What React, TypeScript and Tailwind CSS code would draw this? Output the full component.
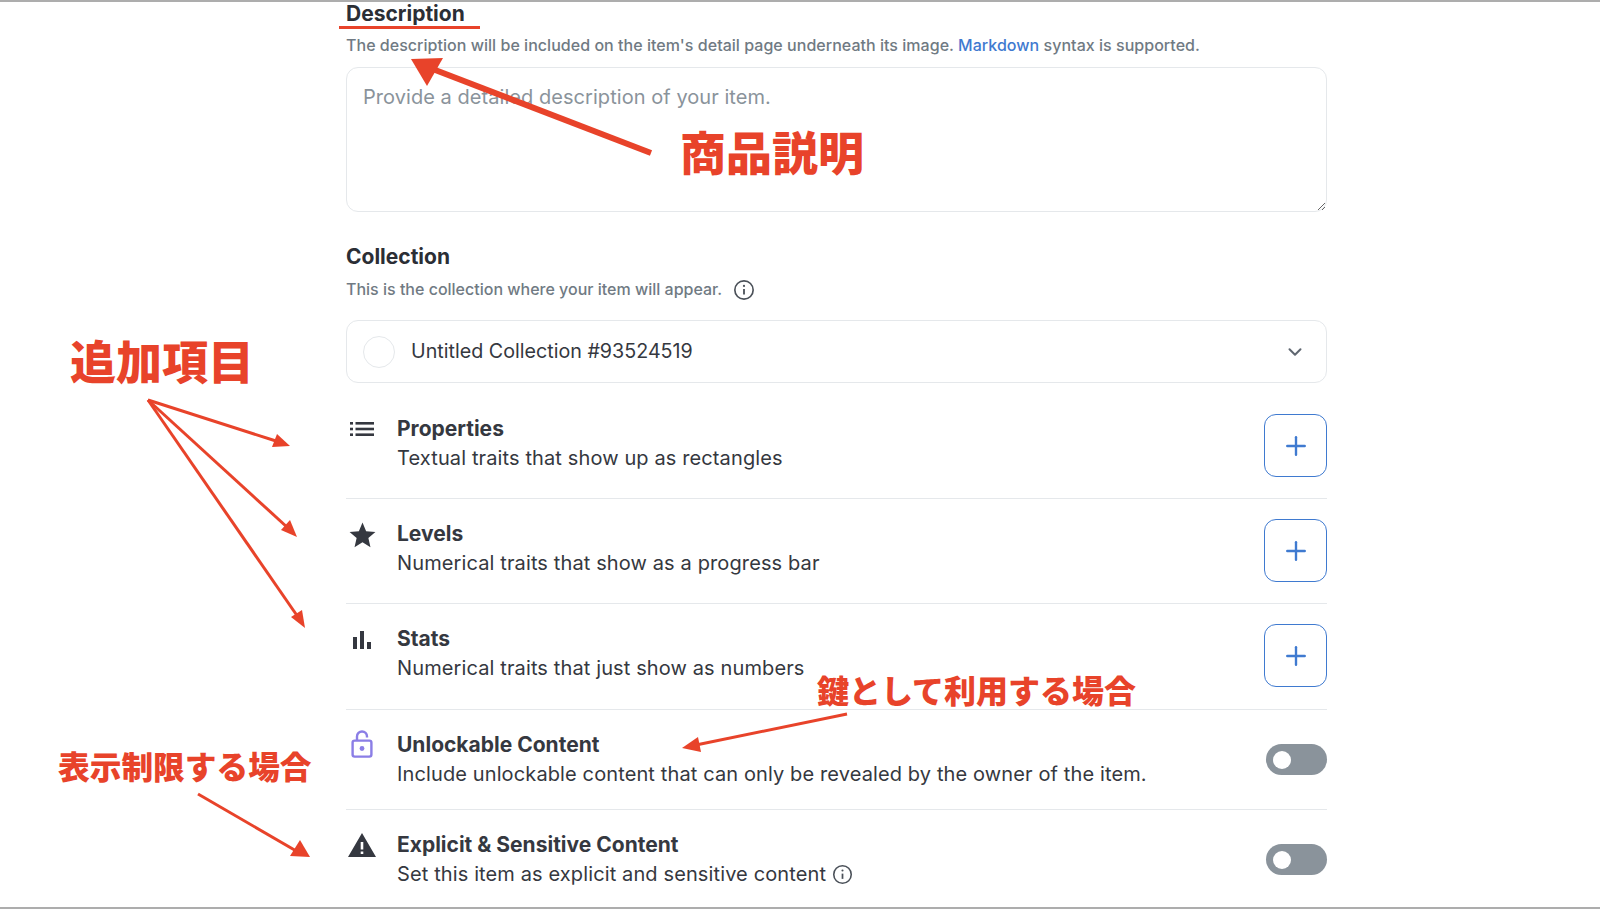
import { ChevronDown, Plus } from 'lucide-react';
import type { ReactNode } from 'react';

const RED = '#e8432a';

function InfoIcon({ className }: { className: string }) {
  return (
    <svg className={className} viewBox="0 0 24 24" fill="none" stroke="#4b5159" strokeWidth="1.8">
      <circle cx="12" cy="12" r="10" />
      <path d="M12 11v6" strokeWidth="2" />
      <circle cx="12" cy="7.5" r="1.2" fill="#4b5159" stroke="none" />
    </svg>
  );
}

function ListIcon() {
  return (
    <svg className="w-[26px] h-[16px]" viewBox="0 0 26 16" fill="#353840">
      <rect x="1" y="1" width="3" height="2.6" />
      <rect x="1" y="6.7" width="3" height="2.6" />
      <rect x="1" y="12.4" width="3" height="2.6" />
      <rect x="6.5" y="1" width="18.5" height="2.6" />
      <rect x="6.5" y="6.7" width="18.5" height="2.6" />
      <rect x="6.5" y="12.4" width="18.5" height="2.6" />
    </svg>
  );
}

function StarIcon() {
  return (
    <svg className="w-[31px] h-[31px]" viewBox="0 0 24 24" fill="#353840">
      <path d="M12 17.27 18.18 21l-1.64-7.03L22 9.24l-7.19-.61L12 2 9.19 8.63 2 9.24l5.46 4.73L5.82 21z" />
    </svg>
  );
}

function BarsIcon() {
  return (
    <svg className="w-[20px] h-[18px]" viewBox="0 0 20 18" fill="#353840">
      <rect x="1" y="6" width="4" height="12" />
      <rect x="8" y="0" width="4" height="18" />
      <rect x="15" y="11" width="4" height="7" />
    </svg>
  );
}

function LockIcon() {
  return (
    <svg className="w-[22px] h-[28px]" viewBox="0 0 22 28" fill="none" stroke="#8b7ee6" strokeWidth="2.4">
      <rect x="1.6" y="10.6" width="18.8" height="16" rx="2" />
      <path d="M6 10.5V6.5a5 5 0 0 1 10 0v1" />
      <circle cx="11" cy="18.5" r="2.4" fill="#8b7ee6" stroke="none" />
    </svg>
  );
}

function WarningIcon() {
  return (
    <svg className="w-[30px] h-[26px]" viewBox="0 0 30 26" fill="#353840">
      <path fillRule="evenodd" d="M15 1 29 25H1zM13.7 10v7.5h2.6V10zM13.7 19.5v2.6h2.6v-2.6z" />
    </svg>
  );
}

function AddButton() {
  return (
    <button className="w-[63px] h-[63px] shrink-0 rounded-[12px] border border-[#3f7ad0] flex items-center justify-center bg-white">
      <Plus className="w-[30px] h-[30px] text-[#3f7ad0]" strokeWidth={1.9} />
    </button>
  );
}

function Toggle() {
  return (
    <div className="w-[61px] h-[31px] shrink-0 rounded-full bg-[#8a939b] flex items-center pl-[7px]">
      <div className="w-[18px] h-[18px] rounded-full bg-white" />
    </div>
  );
}

function Row({
  icon,
  title,
  sub,
  action,
  actionClass,
  height,
  iconClass,
  last,
}: {
  icon: ReactNode;
  title: string;
  sub: ReactNode;
  action: ReactNode;
  actionClass: string;
  height: string;
  iconClass: string;
  last?: boolean;
}) {
  return (
    <div className={`flex items-start pt-[21px] ${height} ${last ? '' : 'border-b border-[#e5e8eb]'}`}>
      <div className={`w-8 mr-[19px] flex justify-center ${iconClass}`}>{icon}</div>
      <div className="flex-1">
        <div className="text-[21px] leading-[28px] font-bold text-[#353840]">{title}</div>
        <div className="text-[20px] leading-[30px] text-[#353840] tracking-[0.12px]">{sub}</div>
      </div>
      <div className={actionClass}>{action}</div>
    </div>
  );
}

export default function App() {
  return (
    <div className="relative h-[909px] overflow-hidden bg-white border-t-2 border-b-2 border-[#adadad] font-['Inter','Noto_Sans_CJK_JP',sans-serif]">
      <div className="ml-[346px] w-[981px]">
        <h2 className="text-[21px] leading-[24px] font-bold text-[#2b2e35]">Description</h2>
        <p className="mt-[7px] text-[16px] leading-[24px] text-[#707a83] font-medium tracking-[0.03px]">
          The description will be included on the item's detail page underneath its image.{' '}
          <span className="text-[#3f7ad0]">Markdown</span> syntax is supported.
        </p>
        <textarea
          readOnly
          placeholder="Provide a detailed description of your item."
          className="mt-[10px] block w-full h-[145px] rounded-[12px] border border-[#e5e8eb] px-[16px] py-[14px] text-[20px] leading-[30px] tracking-[0.05px] text-[#353840] placeholder:text-[#8a939b] outline-none"
        />

        <h2 className="mt-[31px] text-[21px] leading-[28px] font-bold text-[#2b2e35]">Collection</h2>
        <div className="mt-[6px] flex items-center text-[16px] leading-[24px] text-[#707a83] font-medium">
          This is the collection where your item will appear.
          <InfoIcon className="ml-[11px] mt-[2px] w-[22px] h-[22px]" />
        </div>
        <div className="mt-[19px] h-[63px] rounded-[12px] border border-[#e5e8eb] flex items-center pl-[16px] pr-[20px]">
          <div className="w-[32px] h-[32px] rounded-full border border-[#e5e8eb]" />
          <span className="ml-[16px] flex-1 text-[19.7px] text-[#353840]">Untitled Collection #93524519</span>
          <ChevronDown className="w-[22px] h-[22px] text-[#5f6670]" strokeWidth={2.2} />
        </div>

        <div className="mt-[11px]">
          <Row
            icon={<ListIcon />}
            iconClass="pt-[6px]"
            title="Properties"
            sub="Textual traits that show up as rectangles"
            action={<AddButton />}
            actionClass="-mt-[1px]"
            height="h-[105px]"
          />
          <Row
            icon={<StarIcon />}
            iconClass="pt-0"
            title="Levels"
            sub="Numerical traits that show as a progress bar"
            action={<AddButton />}
            actionClass="-mt-[1px]"
            height="h-[105px]"
          />
          <Row
            icon={<BarsIcon />}
            iconClass="pt-[6px]"
            title="Stats"
            sub="Numerical traits that just show as numbers"
            action={<AddButton />}
            actionClass="-mt-[1px]"
            height="h-[106px]"
          />
          <Row
            icon={<LockIcon />}
            iconClass="-mt-[1px]"
            title="Unlockable Content"
            sub="Include unlockable content that can only be revealed by the owner of the item."
            action={<Toggle />}
            actionClass="pt-[13px]"
            height="h-[100px]"
          />
          <Row
            icon={<WarningIcon />}
            iconClass="pt-[1px]"
            title="Explicit & Sensitive Content"
            sub={
              <span className="flex items-center">
                Set this item as explicit and sensitive content
                <InfoIcon className="ml-[6px] w-[21px] h-[21px]" />
              </span>
            }
            action={<Toggle />}
            actionClass="pt-[13px]"
            height="h-[96px]"
            last
          />
        </div>
      </div>

      {/* annotations on top of the screenshot */}
      <div className="absolute left-[339px] top-[24px] w-[141px] h-[3px] bg-[#e8432a]" />
      <svg className="absolute left-0 top-[-2px] w-[1600px] h-[909px] pointer-events-none" viewBox="0 0 1600 909">
        <g stroke={RED} fill="none">
          <path d="M651 153 430 68" strokeWidth="6" />
          <path d="M148 400 276 441" strokeWidth="3" />
          <path d="M148 400 288 528" strokeWidth="3" />
          <path d="M148 400 298 617" strokeWidth="3" />
          <path d="M847 714 696 745" strokeWidth="3" />
          <path d="M198 794 298 852" strokeWidth="3" />
        </g>
        <g fill={RED}>
          <path d="M411 59 443 58 427 86z" />
          <path d="M290 446 272 447 277 434z" />
          <path d="M297 537 281 530 290 520z" />
          <path d="M305 628 291 617 302 610z" />
          <path d="M682 748 698 737 701 752z" />
          <path d="M310 857 290 856 300 840z" />
        </g>
      </svg>
      <div className="absolute left-[680px] top-[121px] text-[46px] leading-[60px] font-black text-[#e8432a] whitespace-nowrap">商品説明</div>
      <div className="absolute left-[70px] top-[330px] text-[46px] leading-[60px] font-black text-[#e8432a] whitespace-nowrap">追加項目</div>
      <div className="absolute left-[817px] top-[670px] text-[32px] leading-[40px] font-black text-[#e8432a] whitespace-nowrap">鍵として利用する場合</div>
      <div className="absolute left-[58px] top-[746px] text-[31.7px] leading-[40px] font-black text-[#e8432a] whitespace-nowrap">表示制限する場合</div>
    </div>
  );
}
